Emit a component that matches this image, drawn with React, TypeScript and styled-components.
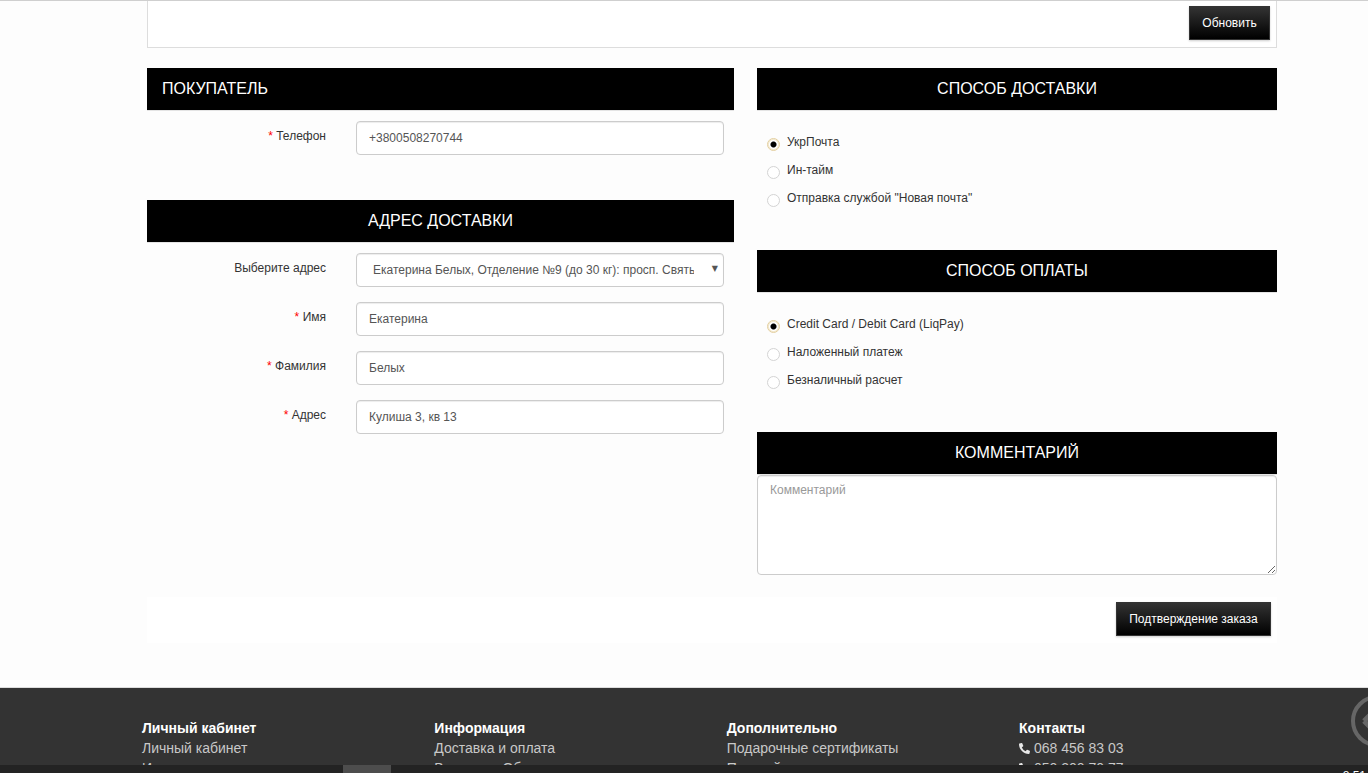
import { FaPhoneAlt } from "react-icons/fa";
import styled, { createGlobalStyle } from "styled-components";

const GlobalStyle = createGlobalStyle`
  html, body {
    margin: 0;
    padding: 0;
    background: #fdfdfd;
  }
  * {
    box-sizing: border-box;
  }
`;

const Page = styled.div`
  position: relative;
  height: 100vh;
  overflow: hidden;
  border-top: 1px solid #cfcfcf;
  font-family: "Liberation Sans", Arial, sans-serif;
  font-size: 12px;
  color: #333;
`;

const Content = styled.div`
  width: 1130px;
  margin-left: 147px;
`;

const CartPanel = styled.div`
  display: flex;
  justify-content: flex-end;
  height: 47px;
  padding: 5px 6px 0 0;
  background: #fff;
  border: 1px solid #ddd;
  border-top: none;
`;

const DarkButton = styled.button`
  height: 34px;
  width: ${(p) => (p.$wide ? "155px" : "81px")};
  padding: 0;
  border: 1px solid #333;
  background: linear-gradient(to bottom, #333, #000);
  color: #fff;
  font-family: inherit;
  font-size: 12px;
  box-shadow: 0 1px 2px rgba(0, 0, 0, 0.2);
`;

const Columns = styled.div`
  display: grid;
  grid-template-columns: 587px 520px;
  column-gap: 23px;
  margin-top: 20px;
`;

const Column = styled.div`
  display: flex;
  flex-direction: column;
`;

const SectionTitle = styled.h2`
  height: 43px;
  margin: 0;
  padding: 0 ${(p) => (p.$left ? "15px" : "0")};
  background: #000;
  border-bottom: 1px solid #e4e4e4;
  color: #fff;
  font-size: 16px;
  font-weight: 400;
  line-height: 41px;
  text-align: ${(p) => (p.$left ? "left" : "center")};
`;

const FormRows = styled.div`
  display: flex;
  flex-direction: column;
  gap: 15px;
  padding: 10px 10px 0 0;
  margin-bottom: ${(p) => p.$after || 0}px;
`;

const FormRow = styled.div`
  display: grid;
  grid-template-columns: 179px 368px;
  column-gap: 30px;
`;

const FieldLabel = styled.label`
  padding-top: 8px;
  line-height: 14px;
  text-align: right;
  color: #333;
`;

const Star = styled.span`
  color: #f00;
`;

const TextInput = styled.input`
  width: 100%;
  height: 34px;
  padding: 0 12px;
  background: #fff;
  border: 1px solid #ccc;
  border-radius: 4px;
  box-shadow: inset 0 1px 1px rgba(0, 0, 0, 0.075);
  color: #555;
  font-family: inherit;
  font-size: 12px;
`;

const SelectWrap = styled.div`
  position: relative;
  &::after {
    content: "▼";
    position: absolute;
    top: 9px;
    right: 6px;
    font-family: "DejaVu Sans", sans-serif;
    font-size: 8px;
    line-height: 14px;
    color: #555;
    pointer-events: none;
  }
`;

const AddressSelect = styled.select`
  width: 100%;
  height: 34px;
  padding: 0 29px 0 16px;
  appearance: none;
  background: #fff;
  border: 1px solid #ccc;
  border-radius: 4px;
  box-shadow: inset 0 1px 1px rgba(0, 0, 0, 0.075);
  color: #555;
  font-family: inherit;
  font-size: 12px;
`;

const RadioList = styled.div`
  display: flex;
  flex-direction: column;
  gap: 10px;
  padding: 22px 0 0 10px;
  margin-bottom: ${(p) => p.$after}px;
`;

const RadioRow = styled.div`
  display: flex;
  gap: 7px;
  height: 18px;
  line-height: 18px;
  color: #333;
`;

const RadioMark = styled.span`
  flex: none;
  width: 13px;
  height: 13px;
  margin-top: 5px;
  border-radius: 50%;
  background: ${(p) =>
    p.$on ? "radial-gradient(circle, #000 0 2.5px, #fff 3.5px)" : "#fff"};
  border: 1px solid ${(p) => (p.$on ? "#e3cf9f" : "#d4d4d4")};
  box-shadow: ${(p) => (p.$on ? "inset 0 0 0 1px #f3e8cd" : "none")};
`;

const CommentBox = styled.textarea`
  display: block;
  width: 100%;
  height: 100px;
  padding: 7px 12px;
  background: #fff;
  border: 1px solid #ccc;
  border-radius: 4px;
  box-shadow: inset 0 1px 1px rgba(0, 0, 0, 0.075);
  color: #555;
  font-family: inherit;
  font-size: 12px;
  &::placeholder {
    color: #999;
  }
`;

const ConfirmBar = styled.div`
  display: flex;
  justify-content: flex-end;
  height: 46px;
  margin-top: 22px;
  padding: 5px 6px 0 0;
  background: #fff;
`;

const Footer = styled.footer`
  position: relative;
  height: 90px;
  margin-top: 44px;
  padding: 30px 0 0 142px;
  background: #333;
  border-top: 1px solid #ddd;
`;

const FooterGrid = styled.div`
  display: grid;
  grid-template-columns: repeat(4, 292.35px);
`;

const FooterTitle = styled.div`
  color: #fff;
  font-size: 14px;
  font-weight: 700;
  line-height: 20px;
`;

const FooterLink = styled.div`
  color: #c8c8c8;
  font-size: 14px;
  line-height: 20px;
  white-space: nowrap;
`;

const PhoneIcon = styled(FaPhoneAlt)`
  width: 11px;
  height: 11px;
  margin-right: 4px;
  vertical-align: -1px;
  color: #e8e8e8;
`;

const ScrollTopIcon = styled.svg`
  position: absolute;
  top: 6px;
  right: -36px;
  width: 54px;
  height: 54px;
`;

const TaskBar = styled.div`
  position: absolute;
  left: 0;
  right: 0;
  bottom: 0;
  height: 8px;
  padding-left: 343px;
  background: #232323;
`;

const TaskBarTab = styled.div`
  width: 48px;
  height: 100%;
  background: #4d4d4d;
`;

const Clock = styled.div`
  position: absolute;
  top: 4px;
  right: 2px;
  color: #fff;
  font-size: 12px;
  line-height: 14px;
`;

const deliveryOptions = ["УкрПочта", "Ин-тайм", 'Отправка службой "Новая почта"'];
const paymentOptions = [
  "Credit Card / Debit Card (LiqPay)",
  "Наложенный платеж",
  "Безналичный расчет",
];

const addressFields = [
  { label: "Имя", value: "Екатерина" },
  { label: "Фамилия", value: "Белых" },
  { label: "Адрес", value: "Кулиша 3, кв 13" },
];

const footerColumns = [
  { title: "Личный кабинет", links: ["Личный кабинет", "История заказов"] },
  { title: "Информация", links: ["Доставка и оплата", "Возврат и Обмен"] },
  { title: "Дополнительно", links: ["Подарочные сертификаты", "Покупай"] },
];

const addressOption =
  "Екатерина Белых, Отделение №9 (до 30 кг): просп. Святьшинский, 1";

function Radios({ options, after }: { options: string[]; after: number }) {
  return (
    <RadioList $after={after}>
      {options.map((option, index) => (
        <RadioRow key={option}>
          <RadioMark $on={index === 0} />
          {option}
        </RadioRow>
      ))}
    </RadioList>
  );
}

function App() {
  return (
    <Page>
      <GlobalStyle />
      <Content>
        <CartPanel>
          <DarkButton>Обновить</DarkButton>
        </CartPanel>
        <Columns>
          <Column>
            <SectionTitle $left>ПОКУПАТЕЛЬ</SectionTitle>
            <FormRows $after={45}>
              <FormRow>
                <FieldLabel>
                  <Star>*</Star> Телефон
                </FieldLabel>
                <TextInput defaultValue="+3800508270744" />
              </FormRow>
            </FormRows>
            <SectionTitle>АДРЕС ДОСТАВКИ</SectionTitle>
            <FormRows>
              <FormRow>
                <FieldLabel>Выберите адрес</FieldLabel>
                <SelectWrap>
                  <AddressSelect defaultValue={addressOption}>
                    <option>{addressOption}</option>
                  </AddressSelect>
                </SelectWrap>
              </FormRow>
              {addressFields.map((field) => (
                <FormRow key={field.label}>
                  <FieldLabel>
                    <Star>*</Star> {field.label}
                  </FieldLabel>
                  <TextInput defaultValue={field.value} />
                </FormRow>
              ))}
            </FormRows>
          </Column>
          <Column>
            <SectionTitle>СПОСОБ ДОСТАВКИ</SectionTitle>
            <Radios options={deliveryOptions} after={43} />
            <SectionTitle>СПОСОБ ОПЛАТЫ</SectionTitle>
            <Radios options={paymentOptions} after={43} />
            <SectionTitle>КОММЕНТАРИЙ</SectionTitle>
            <CommentBox placeholder="Комментарий" />
          </Column>
        </Columns>
        <ConfirmBar>
          <DarkButton $wide>Подтверждение заказа</DarkButton>
        </ConfirmBar>
      </Content>
      <Footer>
        <FooterGrid>
          {footerColumns.map((column) => (
            <div key={column.title}>
              <FooterTitle>{column.title}</FooterTitle>
              {column.links.map((link) => (
                <FooterLink key={link}>{link}</FooterLink>
              ))}
            </div>
          ))}
          <div>
            <FooterTitle>Контакты</FooterTitle>
            <FooterLink>
              <PhoneIcon />
              068 456 83 03
            </FooterLink>
            <FooterLink>
              <PhoneIcon />
              050 200 70 77
            </FooterLink>
          </div>
        </FooterGrid>
        <ScrollTopIcon viewBox="0 0 54 54" fill="none" stroke="#666" strokeWidth="4">
          <circle cx="27" cy="27" r="24" />
          <path d="M14 27 L24 17 M14 27 L24 37" strokeWidth="5" />
        </ScrollTopIcon>
      </Footer>
      <TaskBar>
        <TaskBarTab />
        <Clock>8:51</Clock>
      </TaskBar>
    </Page>
  );
}

export default App;
